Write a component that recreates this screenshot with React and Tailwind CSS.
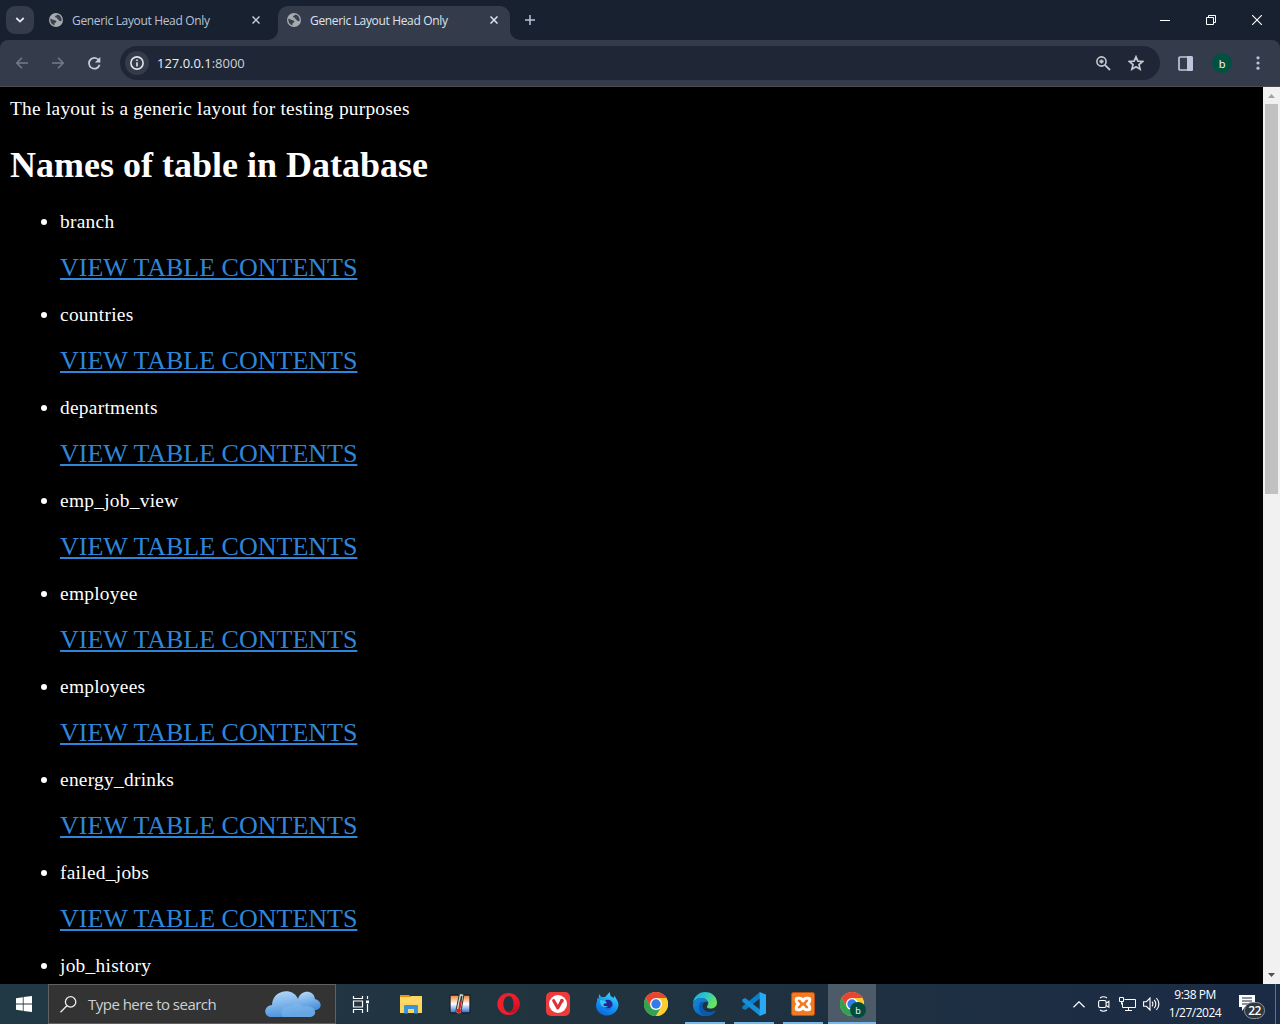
import React from "react";

const UI = "font-['Open_Sans','Noto_Sans',sans-serif]";

function Globe() {
  return (
    <svg width="14" height="14" viewBox="0 0 14 14" className="shrink-0">
      <circle cx="7" cy="7" r="7" fill="#a7abb0" />
      <path d="M1.3 5.6C2.6 6.6 4.4 6.8 5.6 7.2 7.4 7.4 7.8 8.6 7 9.4 5.6 9.6 5.2 10.4 5.6 12.4 3 12 1 9.4 1.3 5.6ZM8.6 1.4C7.8 2.6 6 2.4 6 3.8 6.2 5 7.8 4.4 8.2 5.4 8.4 6.6 9.8 6.4 10.2 7.8 11 8.6 12.2 8 12.7 7.6 12.9 4.6 11.2 2 8.6 1.4Z" fill="#3a4250" />
    </svg>
  );
}

function Cross({ color }) {
  return (
    <svg width="8" height="8" viewBox="0 0 8 8" className="shrink-0">
      <path d="M.5.5l7 7M7.5.5l-7 7" stroke={color} strokeWidth="1.5" />
    </svg>
  );
}

function TitleBar() {
  return (
    <div className="flex h-10 bg-[#182130]">
      <div className="ml-[6px] mt-[6px] flex h-7 w-7 shrink-0 items-center justify-center rounded-[9px] bg-[#343c4c]">
        <svg width="10" height="8" viewBox="0 0 10 8"><path d="M1.3 2 5 5.6 8.7 2" fill="none" stroke="#e3e6ed" strokeWidth="1.8" /></svg>
      </div>
      <div className="ml-[15px] flex h-10 w-[219px] shrink-0 items-center">
        <Globe />
        <span className="ml-[9px] w-[180px] whitespace-nowrap pt-[2px] text-[12px] tracking-[-0.34px] text-[#bac3d6]">Generic Layout Head Only</span>
        <Cross color="#c3cad8" />
      </div>
      <div className="flex h-10 w-[10px] shrink-0 items-end bg-[#343c4c]">
        <div className="h-10 w-[10px] rounded-br-[10px] bg-[#182130]" />
      </div>
      <div className="mt-[6px] flex h-[34px] w-[232px] shrink-0 items-center rounded-t-[10px] bg-[#343c4c] pb-[6px] pl-[9px]">
        <Globe />
        <span className="ml-[9px] w-[180px] whitespace-nowrap pt-[2px] text-[12px] tracking-[-0.34px] text-[#dfe3ec]">Generic Layout Head Only</span>
        <Cross color="#e0e4ec" />
      </div>
      <div className="h-10 w-[10px] shrink-0 bg-[#343c4c]">
        <div className="h-10 w-[10px] rounded-bl-[10px] bg-[#182130]" />
      </div>
      <svg className="ml-[5px] mt-[15px] shrink-0" width="10" height="10" viewBox="0 0 10 10"><path d="M5 0v10M0 5h10" stroke="#b9c4da" strokeWidth="1.5" /></svg>
      <div className="ml-auto flex items-center gap-[36px] pr-[18px]">
        <svg width="10" height="10" viewBox="0 0 10 10"><path d="M0 5.5h10" stroke="#fff" /></svg>
        <svg width="10" height="10" viewBox="0 0 10 10"><path d="M.5 2.5h7v7h-7zM2.5 2.5v-2h7v7h-2" fill="none" stroke="#fff" /></svg>
        <svg width="10" height="10" viewBox="0 0 10 10"><path d="M0 0l10 10M10 0 0 10" stroke="#fff" strokeWidth="1.1" /></svg>
      </div>
    </div>
  );
}

function Toolbar() {
  return (
    <div className="bg-[#182130]">
      <div className="flex h-[47px] items-center rounded-t-[8px] border-b border-[#4a4c52] bg-[#343c4c]">
        <div className="ml-4 flex w-[104px] shrink-0 gap-6">
          <svg width="12" height="12" viewBox="0 0 12 12"><path d="M12 6H1M6 .8.8 6 6 11.2" fill="none" stroke="#747b8a" strokeWidth="1.5" /></svg>
          <svg width="12" height="12" viewBox="0 0 12 12"><path d="M0 6h11M6 .8 11.2 6 6 11.2" fill="none" stroke="#747b8a" strokeWidth="1.5" /></svg>
          <svg width="13" height="13" viewBox="0 0 13 13"><path d="M11.3 4A5.4 5.4 0 1 0 11.6 7.8" fill="none" stroke="#c7d0e2" strokeWidth="1.7" /><path d="M12.3 0v5.6H6.9z" fill="#c7d0e2" /></svg>
        </div>
        <div className="flex h-[34px] w-[1040px] shrink-0 items-center rounded-full bg-[#1f2737] pl-[5px]">
          <div className="flex h-6 w-6 items-center justify-center rounded-full bg-[#343c4c]">
            <svg width="14" height="14" viewBox="0 0 14 14"><circle cx="7" cy="7" r="6.1" fill="none" stroke="#e1e4ea" strokeWidth="1.6" /><path d="M7 6.2v4.3M7 3.4V5" stroke="#e1e4ea" strokeWidth="1.6" /></svg>
          </div>
          <span className="ml-2 whitespace-nowrap pt-px text-[13px] tracking-[-0.02px] text-[#cdd0d6]"><span className="text-[#eceef2]">127.0.0.1</span>:8000</span>
          <svg className="ml-auto" width="15" height="15" viewBox="0 0 15 15"><circle cx="5.5" cy="5.5" r="4.6" fill="none" stroke="#c6c8cd" strokeWidth="1.6" /><path d="M5.5 3.4v4.2M3.4 5.5h4.2M8.8 8.8l5.2 5.2" stroke="#c6c8cd" strokeWidth="1.8" /></svg>
          <svg className="ml-[17px] mr-4" width="16" height="16" viewBox="0 0 16 16"><path d="M8 1.8l1.9 4.3 4.7.4-3.6 3.1 1.1 4.6L8 11.7l-4.1 2.5L5 9.6 1.4 6.5l4.7-.4z" fill="none" stroke="#c6c8cd" strokeWidth="1.7" /></svg>
        </div>
        <svg className="ml-[18px] shrink-0" width="15" height="15" viewBox="0 0 15 15"><rect x="1" y="1" width="13" height="13" rx="1" fill="none" stroke="#bcc7de" strokeWidth="1.7" /><path d="M9 0h4.5Q15 0 15 1.5v12Q15 15 13.5 15H9z" fill="#bcc7de" /></svg>
        <div className="ml-[19px] flex h-5 w-5 shrink-0 items-center justify-center rounded-full bg-[#00513f] text-[11px] leading-none text-white">b</div>
        <svg className="ml-[24px] shrink-0" width="4" height="14" viewBox="0 0 4 14" fill="#b9c4da"><circle cx="2" cy="1.8" r="1.6" /><circle cx="2" cy="7" r="1.6" /><circle cx="2" cy="12.2" r="1.6" /></svg>
      </div>
    </div>
  );
}

const tables = ["branch", "countries", "departments", "emp_job_view", "employee", "employees", "energy_drinks", "failed_jobs", "job_history"];

function Page() {
  return (
    <div className="flex h-[897px] bg-black">
      <main className="h-[897px] w-[1263px] overflow-hidden pl-[10px] pt-[10px] font-['Liberation_Serif',serif] text-[20px] leading-[23px] text-white">
        <p className="text-[19.4px] leading-[24px] tracking-[0.235px]">The layout is a generic layout for testing purposes</p>
        <h1 className="mt-[23px] text-[36px] font-bold leading-[42px]">Names of table in Database</h1>
        <ul className="mt-[24px] list-disc pl-[50px]">
          {tables.map((name, i) => (
            <li key={name} className={i < tables.length - 1 ? "h-[93px]" : ""}>
              <div className="text-[19.4px] tracking-[0.27px]">{name}</div>
              {i < tables.length - 1 && (
                <a className="mt-[20px] block w-fit text-[26px] leading-[30px] text-[#2f86d9] underline decoration-[2px] underline-offset-[2px]">VIEW TABLE CONTENTS</a>
              )}
            </li>
          ))}
        </ul>
      </main>
      <div className="flex w-[17px] flex-col items-center bg-[#f1f1f1]">
        <svg className="shrink-0" width="17" height="17" viewBox="0 0 17 17"><path d="M5 11l3.5-4L12 11z" fill="#a3a3a3" /></svg>
        <div className="mr-px h-[390px] w-[13px] bg-[#c1c1c1]" />
        <svg className="mt-auto shrink-0" width="17" height="17" viewBox="0 0 17 17"><path d="M5 6l3.5 4L12 6z" fill="#505050" /></svg>
      </div>
    </div>
  );
}

function ChromeLogo() {
  return (
    <g>
      <circle cx="12" cy="12" r="12" fill="#ffc928" />
      <path d="M1.6 6A12 12 0 0 1 22.4 6H12L6.8 15z" fill="#e94335" />
      <path d="M1.6 6 6.8 15 12 18 17.2 15 12 24A12 12 0 0 1 1.6 6z" fill="#30a350" />
      <path d="M22.4 6A12 12 0 0 1 12 24l5.2-9L17 9 12 6z" fill="#ffcd30" />
      <circle cx="12" cy="12" r="6" fill="#fff" />
      <circle cx="12" cy="12" r="4.7" fill="#347bea" />
    </g>
  );
}

const icons = {
  tasks: (
    <svg className="mr-[2px]" width="18" height="17" viewBox="0 0 18 17" fill="none" stroke="#fff"><path d="M1.5 0v2.5h9V0M1.5 17v-3.5h9V17M1.5 5v6h9V5zM15.5 0v3M15.5 8v8" strokeWidth="1.2" /><path d="M14 4.5h3v2.7h-3z" fill="#fff" stroke="none" /></svg>
  ),
  folder: (
    <svg width="22" height="19" viewBox="0 0 22 19"><path d="M0 0h9l2 2H0z" fill="#e29a06" /><path d="M0 2h10l1-1h11v17H0z" fill="#ffd45c" /><path d="M0 3h22v5H0z" fill="#ffdc78" opacity=".5" /><path d="M4 18.5V11q0-1 1-1h12q1 0 1 1v7.5h-4V14H8v4.5z" fill="#3795dc" /></svg>
  ),
  thermo: (
    <svg width="22" height="22" viewBox="0 0 22 22">
      <defs><linearGradient id="heat" x1="0" x2="0" y1="0" y2="1"><stop stopColor="#f17b2b" /><stop offset=".5" stopColor="#fff" /><stop offset="1" stopColor="#2467dc" /></linearGradient></defs>
      <rect x="1" y="2" width="20" height="18" rx="1" fill="url(#heat)" stroke="#18232b" strokeWidth="1.3" />
      <path d="m10.5.5 4.5.8-2.6 14.5q1.2 4-2.4 5.2-4-.6-2.7-5z" fill="#d6ddd0" stroke="#25352f" />
      <path d="m12.7 3-2.3 12" stroke="#26352e" strokeWidth="1.6" /><path d="m11.8 8-1.8 10" stroke="#e31919" strokeWidth="1.8" /><circle cx="9.8" cy="17.8" r="2.2" fill="#e31919" />
    </svg>
  ),
  opera: (
    <svg width="23" height="22" viewBox="0 0 23 22"><defs><linearGradient id="op" x1="0" x2="0" y1="0" y2="1"><stop stopColor="#ff1b2d" /><stop offset="1" stopColor="#a70014" /></linearGradient></defs><path fillRule="evenodd" d="M11.5 0a11.2 11 0 1 0 0 22 11.2 11 0 1 0 0-22zM11.7 3c3 0 5 3.5 5 8s-2 8-5 8-5.3-3.5-5.3-8 2.3-8 5.3-8z" fill="#ef202e" /><path d="M16.7 11c0-4.5-2-8-5-8-1.6 0-3 1-4.1 2.6C10 1.6 14 .6 18.5 2.7c5.5 4.3 5.5 12.3 0 16.6C14 21.4 10 20.4 7.6 16.4 8.7 18 10.1 19 11.7 19c3 0 5-3.5 5-8z" fill="url(#op)" opacity=".6" /></svg>
  ),
  vivaldi: (
    <svg width="24" height="24" viewBox="0 0 24 24"><rect width="24" height="24" rx="5" fill="#ef3a3c" /><circle cx="12" cy="12" r="9" fill="#fff" /><path d="M7.6 8.5 11.8 16 15.6 9" fill="none" stroke="#df3037" strokeWidth="3" strokeLinecap="round" strokeLinejoin="round" /><circle cx="15.9" cy="8.7" r="1.9" fill="#df3037" /></svg>
  ),
  firefox: (
    <svg width="24" height="24" viewBox="0 0 24 24"><defs><linearGradient id="ff" x1=".8" x2=".3" y1="0" y2="1"><stop stopColor="#49d9fa" /><stop offset=".5" stopColor="#139df3" /><stop offset="1" stopColor="#0968df" /></linearGradient></defs><path d="M4.2 2 6.3 5.1 10 5 12 3 14.7 0 15.5 4 19 6l.4-2.5 3 5.2C26 15 20 23.5 12 23.5S-1.2 16 2 9.2L2.2 6l1.3 1z" fill="url(#ff)" /><path d="M6 9c2-1.7 4-1 5 .2l4-.4c4 1.4 4 7.7-1 9.4-5 .8-8.5-3.3-8-9.2z" fill="#1e73df" /><circle cx="13" cy="12" r="4.3" fill="#26258f" /><path d="m5 8 5 .5 2 2.5-4 1 1 2 4 .2c-4 2.8-8.4-.6-8-6.2z" fill="#36c5f5" /></svg>
  ),
  chrome: <svg width="24" height="24" viewBox="0 0 24 24"><ChromeLogo /></svg>,
  edge: (
    <svg width="24" height="24" viewBox="0 0 24 24"><defs><linearGradient id="edge-top" x1="0" x2="1" y1="0" y2=".5"><stop stopColor="#1ba7dc" /><stop offset=".5" stopColor="#2cc6c9" /><stop offset="1" stopColor="#6be45d" /></linearGradient><linearGradient id="edge-low" x1="0" x2="1" y1="0" y2="1"><stop stopColor="#1789e4" /><stop offset="1" stopColor="#0754a6" /></linearGradient></defs><path d="M0 11C1 4 6 0 12 0c7 0 12 5 12 10.5 0 4-3 6-6.5 6-3 0-4.5-1.3-3-3C17 10 13 6 8.5 6 5 6 2 7.5 0 11z" fill="url(#edge-top)" /><path d="M0 11.5C1.5 8 5 6 8.8 6c3 0 5.8 1.8 6 4.5-2.6-2-5.5.2-5.6 3.3C9 18 13.5 21 18 20c2-.4 3.4-1.3 4.2-1.2.6.2.3.7 0 1.1C15 28-1 24 0 11.5z" fill="url(#edge-low)" /><path d="M8 10c-4 4.5-1.6 12 4 14 5 .3 8.5-1.8 10.5-5-6 3-14 .5-13-6 0-1 .6-2 1.5-2.7z" fill="#0959ad" /></svg>
  ),
  code: (
    <svg width="24" height="24" viewBox="0 0 24 24"><path d="M18 0v6.5L3.2 18 .3 16.5v-2z" fill="#087fc7" /><path d="M.3 7.5 3.2 6 18 17.5V24L.3 9.5z" fill="#168fd9" /><path d="m17.7 0 6.3 2.5v19L17.7 24z" fill="#29a8f3" /></svg>
  ),
  xampp: (
    <svg width="24" height="24" viewBox="0 0 24 24"><rect x=".5" y=".5" width="23" height="23" rx="2" fill="#f47a20" stroke="#bd4e10" /><path d="M5.2 8Q5.2 6.3 7 6.3h2c2 0 2 1.700 3 2.700 1-1 1-2.700 3-2.700h2q1.800 0 1.800 1.700c0 2-1 3-2.300 4 1.500 1 2.300 2 2.300 4q0 1.700-1.800 1.700h-2c-2 0-2-1.700-3-2.700-1 1-1 2.700-3 2.700H7q-1.800 0-1.800-1.700c0-2 .8-3 2.300-4C6 11 5.200 10 5.200 8z" fill="none" stroke="#fff" strokeWidth="3" strokeLinejoin="round" /></svg>
  ),
};

const pinned = ["tasks", "folder", "thermo", "opera", "vivaldi", "firefox", "chrome", "edge", "code", "xampp"];
const running = ["edge", "code", "xampp"];

function Taskbar() {
  return (
    <div className="flex h-10 bg-linear-to-r from-[#203944] via-[#20333f] to-[#1b2b45] text-white">
      <div className="flex w-12 shrink-0 items-center justify-center">
        <svg width="16" height="16" viewBox="0 0 16 16" fill="#fff"><path d="M0 2.2 6.8 1.2v6.4H0zM7.6 1.1 16 0v7.6H7.6zM0 8.4h6.8v6.4L0 13.8zM7.6 8.4H16V16l-8.4-1.1z" /></svg>
      </div>
      <div className="mr-px flex w-72 shrink-0 items-center border border-[#62605f] bg-[#333] pl-[11px]">
        <svg width="17" height="17" viewBox="0 0 17 17" fill="none" stroke="#eee" strokeWidth="1.3"><circle cx="10.6" cy="5.9" r="5.2" /><path d="M6.9 9.7.5 16.2" /></svg>
        <span className="ml-[11px] whitespace-nowrap text-[15px] leading-[24px] tracking-[-0.52px] text-[#d0d0d0]">Type here to search</span>
        <svg className="ml-auto mr-[14px]" width="56" height="27" viewBox="0 0 56 27"><defs><linearGradient id="cloud" x1="0" x2=".3" y1="0" y2="1"><stop stopColor="#b9dcfb" /><stop offset="1" stopColor="#4e94dc" /></linearGradient></defs><g fill="url(#cloud)"><path d="M33 8C36-2 49-1 50 8c8 2 7 11 0 11H38z" /><path d="M7 26C-2 26-2 15 7 14 7-1 28-5 33 8c3 0 5 3 5 6l9 2c6 5 3 10-3 10z" /></g><path d="M27 15c3-5 10-3 10 1 6-2 13 0 13 5 0 3-3 5-6 5H18c-5-6 2-12 9-11z" fill="#86bdf0" opacity=".45" /></svg>
      </div>
      <div className="flex">
        {pinned.map((id) => (
          <div key={id} className="flex h-10 w-[49px] shrink-0 flex-col items-center">
            <div className="flex h-[38px] items-center justify-center pt-[2px]">{icons[id]}</div>
            {running.includes(id) && <div className="h-[2px] w-10 bg-[#76b9ed]" />}
          </div>
        ))}
      </div>
      <div className="ml-px flex h-10 w-12 shrink-0 flex-col items-center bg-[#4d5b68]">
        <div className="flex h-[38px] w-6 items-center pt-[2px]">
          <div className="relative h-6 w-6">
            {icons.chrome}
            <span className="absolute left-[10px] top-[10px] flex h-4 w-4 items-center justify-center rounded-full bg-[#004d40] text-[9px] leading-none">b</span>
          </div>
        </div>
        <div className="h-[2px] w-12 bg-[#76b9ed]" />
      </div>
      <div className="ml-auto flex items-center">
        <svg width="12" height="7" viewBox="0 0 12 7"><path d="M.5 6.2 6 .8l5.5 5.4" fill="none" stroke="#fff" strokeWidth="1.2" /></svg>
        <svg className="ml-[13px]" width="12" height="16" viewBox="0 0 12 16" fill="none" stroke="#fff" strokeWidth="1.1"><rect x=".6" y="4.5" width="7.5" height="7" rx="1.5" /><path d="m8.1 7 2.8-1.8v6L8.1 9.5M2 2Q5.5-.5 9 2M2 14q3.5 2.5 7 0" /></svg>
        <svg className="ml-[9px]" width="17" height="14" viewBox="0 0 17 14" fill="none" stroke="#fff"><path d="M5.5 2.5h11v8H3.5v-5M.5.5h4v4h-4zM2.5 4.5v3M9.5 10.5v3M6 13.5h7" /></svg>
        <svg className="ml-[7px]" width="17" height="14" viewBox="0 0 17 14" fill="none" stroke="#fff" strokeWidth="1.1"><path d="M.6 4.7h2.8L7 1v12L3.4 9.3H.6zM9 4.7q1.8 2.3 0 4.6M11.2 2.8q3.3 4.2 0 8.4M13.4 1q5 6 0 12" /></svg>
        <div className="ml-[5px] flex w-[60px] flex-col items-center whitespace-nowrap text-[12px] leading-[18px] tracking-[-0.5px]">
          <span>9:38 PM</span>
          <span>1/27/2024</span>
        </div>
        <div className="relative ml-[14px] h-[26px] w-[26px]">
          <svg width="16" height="17" viewBox="0 0 16 17" className="mt-[4px]"><path d="M0 0h16v12H6l-3 4v-4H0z" fill="#fff" /><path d="M3 3h10M3 6h10M3 9h7" stroke="#1b2b40" strokeWidth="1.1" /></svg>
          <span className="absolute left-[5px] top-[11px] flex h-[17px] w-[21px] items-center justify-center rounded-full border border-[#8d949b] bg-[#30363d] text-[12px] font-semibold leading-none tracking-[-0.5px]">22</span>
        </div>
        <div className="ml-[10px] mr-1 h-10 w-px bg-[#64717f]" />
      </div>
    </div>
  );
}

export default function App() {
  return (
    <div className={"h-[1024px] w-[1280px] overflow-hidden bg-black " + UI}>
      <TitleBar />
      <Toolbar />
      <Page />
      <Taskbar />
    </div>
  );
}
